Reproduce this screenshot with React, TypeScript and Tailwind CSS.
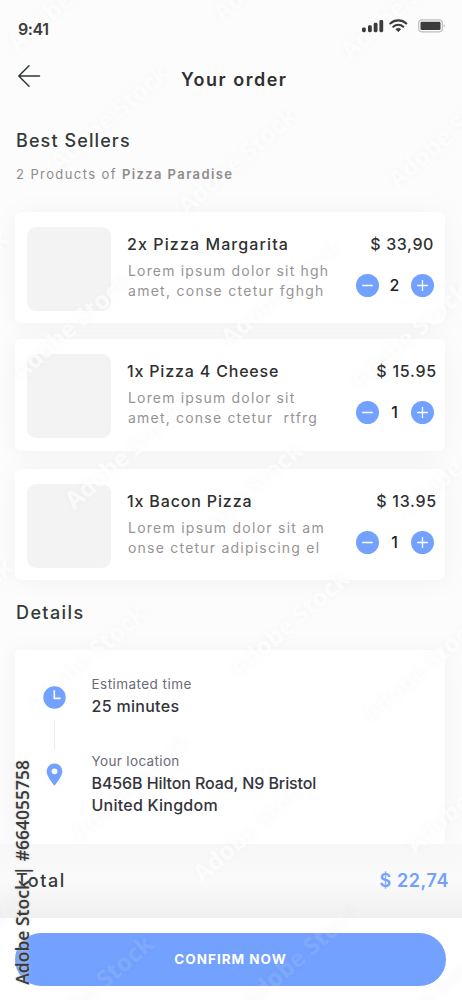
import { useState } from "react"

type Item = {
  id: string
  title: string
  lines: string[]
  price: string
  qty: number
  titleClass: string
  lineClasses: string[]
  priceClass: string
  cardClass: string
}

const items: Item[] = [
  {
    id: "margarita",
    title: "2x Pizza Margarita",
    lines: ["Lorem ipsum dolor sit hgh", "amet, conse ctetur fghgh"],
    price: "$ 33,90",
    qty: 2,
    titleClass: "tracking-[1.1px]",
    lineClasses: ["tracking-[1.17px]", "tracking-[1.27px]"],
    priceClass: "mr-[11px] tracking-[0.6px]",
    cardClass: "h-[111px]",
  },
  {
    id: "cheese",
    title: "1x Pizza 4 Cheese",
    lines: ["Lorem ipsum dolor sit", "amet, conse ctetur  rtfrg"],
    price: "$ 15.95",
    qty: 1,
    titleClass: "tracking-[0.82px]",
    lineClasses: ["tracking-[1.17px]", "tracking-[1.2px]"],
    priceClass: "mr-[8px] tracking-[0.75px]",
    cardClass: "mt-4 h-[112px]",
  },
  {
    id: "bacon",
    title: "1x Bacon Pizza",
    lines: ["Lorem ipsum dolor sit am", "onse ctetur adipiscing el"],
    price: "$ 13.95",
    qty: 1,
    titleClass: "tracking-[0.85px]",
    lineClasses: ["tracking-[1.25px]", "tracking-[1.22px]"],
    priceClass: "mr-[8px] tracking-[0.75px]",
    cardClass: "mt-[18px] h-[111px]",
  },
]

// centre points of the repeated stock label
const marks = [
  [67, -3], [400, 5], [272, -33], [109, 117], [237, 160], [447, 134],
  [-52, 283], [71, 326], [280, 292], [409, 335], [124, 455], [243, 495],
  [457, 465], [-47, 611], [86, 658], [289, 623], [421, 669], [130, 787],
  [252, 828], [465, 799], [-34, 945], [93, 988], [300, 955], [430, 996],
]

function StatusBar() {
  return (
    <div className="relative z-10 flex h-[58px] items-center justify-between pl-[18px] pr-[16px]">
      <span className="text-[16px] font-semibold leading-5 tracking-[-0.4px] text-[#3c3c3c]">9:41</span>
      <svg className="-mt-[7px]" width="85" height="14" viewBox="0 0 85 14" fill="none">
        <g fill="#3c3c3c">
          <rect x="1" y="8.5" width="3.8" height="4.7" rx="1.4" />
          <rect x="7" y="6.3" width="3.8" height="6.9" rx="1.4" />
          <rect x="12.7" y="3.8" width="3.8" height="9.4" rx="1.4" />
          <rect x="18.4" y="1" width="3.8" height="12.2" rx="1.4" />
          <path d="M34.9 10.2a4 4 0 0 1 4.8 0l-2.4 2.5z" stroke="#3c3c3c" strokeWidth=".8" strokeLinejoin="round" />
        </g>
        <path d="M29.3 4.5a11.7 11.7 0 0 1 16 0M32.3 7.7a7.4 7.4 0 0 1 10 0" stroke="#3c3c3c" strokeWidth="2.1" strokeLinecap="round" />
        <rect x="57.7" y=".8" width="23.6" height="12" rx="3.2" stroke="#bdbdbd" strokeWidth="1.2" />
        <rect x="59.5" y="2.7" width="20" height="8.2" rx="1.2" fill="#3c3c3c" />
        <path d="M82.7 5c1.5.5 1.5 3.2 0 3.7z" fill="#bdbdbd" />
      </svg>
    </div>
  )
}

function RoundButton({ plus, onClick }: { plus?: boolean; onClick: () => void }) {
  return (
    <button
      type="button"
      aria-label={plus ? "Increase" : "Decrease"}
      onClick={onClick}
      className="flex size-[23px] items-center justify-center rounded-full bg-[#72a1ff]"
    >
      <svg width="11" height="11" viewBox="0 0 11 11" stroke="#fff" strokeWidth="1.3" strokeLinecap="round">
        <path d="M.6 5.5h9.8" />
        {plus && <path d="M5.5.6v9.8" />}
      </svg>
    </button>
  )
}

function ProductCard({ item }: { item: Item }) {
  const [qty, setQty] = useState(item.qty)

  return (
    <div className={`flex rounded-[6px] bg-white pl-3 shadow-[0_2px_28px_rgba(0,0,0,0.045)] ${item.cardClass}`}>
      <div className="mt-[15px] size-[84px] shrink-0 rounded-[9px] bg-[#f3f3f3]" />
      <div className="relative z-10 ml-4 flex-1 whitespace-pre pt-[22px]">
        <h3 className={`text-[16px] font-medium leading-5 text-[#303030] ${item.titleClass}`}>{item.title}</h3>
        <div className="ml-px mt-[7px] text-[14px] leading-5 text-[#969494]">
          {item.lines.map((line, i) => (
            <p key={line} className={item.lineClasses[i]}>
              {line}
            </p>
          ))}
        </div>
      </div>
      <div className="relative z-10 flex w-[100px] shrink-0 flex-col pt-[22px]">
        <span className={`self-end whitespace-nowrap text-[16px] font-medium leading-5 text-[#303030] ${item.priceClass}`}>
          {item.price}
        </span>
        <div className="ml-[10.5px] mt-[20px] flex items-center">
          <RoundButton onClick={() => setQty(Math.max(0, qty - 1))} />
          <span className="-mt-px w-8 text-center text-[16px] font-medium leading-5 text-[#222228]">{qty}</span>
          <RoundButton plus onClick={() => setQty(qty + 1)} />
        </div>
      </div>
    </div>
  )
}

function DetailsCard() {
  return (
    <div className="mt-[25px] flex h-[194px] rounded-[4px] bg-white pl-[28px] pt-[25px] shadow-[0_2px_28px_rgba(0,0,0,0.045)]">
      <div className="relative z-10 flex w-[23px] flex-col items-center pt-[11px]">
        <svg width="23" height="23" viewBox="0 0 23 23">
          <circle cx="11.5" cy="11.5" r="11.2" fill="#72a1ff" />
          <path d="M11.3 4.2v8.2h6.3" stroke="#fff" strokeWidth="1.6" fill="none" />
        </svg>
        <div className="mt-[11px] h-[29px] w-[1.5px] bg-[#ececee]" />
        <svg className="mt-[14px]" width="17" height="23" viewBox="0 0 17 23">
          <path
            fill="#72a1ff"
            fillRule="evenodd"
            d="M8.5.4a7.8 7.8 0 0 0-7.9 7.8c0 5.6 7.9 14.4 7.9 14.4s7.9-8.8 7.9-14.4A7.8 7.8 0 0 0 8.5.4zm0 5a2.9 2.9 0 1 1 0 5.8 2.9 2.9 0 0 1 0-5.8z"
          />
        </svg>
      </div>
      <div className="relative z-10 ml-[25.5px] whitespace-nowrap">
        <p className="text-[13.5px] leading-[18px] tracking-[0.45px] text-[#6d6b78]">Estimated time</p>
        <p className="mt-[2px] text-[16px] font-medium leading-[22px] tracking-[0.3px] text-[#34343c]">25 minutes</p>
        <p className="mt-[35px] text-[13.5px] leading-[18px] tracking-[0.35px] text-[#6d6b78]">Your location</p>
        <div className="mt-[2px] text-[16px] font-medium leading-[22px] text-[#34343c]">
          <p className="tracking-[-0.1px]">B456B Hilton Road, N9 Bristol</p>
          <p className="tracking-[0.25px]">United Kingdom</p>
        </div>
      </div>
    </div>
  )
}

function StockMarks() {
  return (
    <div className="pointer-events-none absolute inset-0 z-0 overflow-hidden font-['Open_Sans','Noto_Sans',sans-serif]">
      {marks.map(([x, y]) => (
        <span
          key={`${x},${y}`}
          className={`absolute -translate-x-1/2 -translate-y-1/2 -rotate-[41deg] whitespace-nowrap text-[24px] font-bold leading-none [text-shadow:0_0_9px_rgba(0,0,0,0.03)] ${
            y > 930 ? "text-white/10" : "text-white/65"
          }`}
          style={{ left: x, top: y }}
        >
          Adobe Stock
        </span>
      ))}
    </div>
  )
}

export default function App() {
  return (
    <div className="relative isolate flex h-[1000px] w-[462px] flex-col overflow-hidden bg-[#fcfcfc] font-[Inter,sans-serif]">
      <StatusBar />
      <header className="relative z-10 flex h-[44px] items-center pl-[17px]">
        <svg className="-mt-[8px] shrink-0" width="24" height="24" viewBox="0 0 24 24" fill="none" stroke="#303535" strokeWidth="1.5" strokeLinecap="round" strokeLinejoin="round">
          <path d="M22.5 12H2M12 1.8 1.8 12 12 22.2" />
        </svg>
        <h1 className="ml-[140px] whitespace-nowrap text-[18px] font-semibold leading-6 tracking-[1.5px] text-[#303030]">Your order</h1>
      </header>

      <main className="pl-[15px] pr-[17px]">
        <h2 className="relative z-10 mt-[27px] pl-px text-[18px] font-medium leading-6 tracking-[1.1px] text-[#353939]">Best Sellers</h2>
        <p className="relative z-10 mt-[11px] pl-px text-[13px] leading-5 tracking-[1.4px] text-[#8d8b8b]">
          2 Products of <span className="font-semibold">Pizza Paradise</span>
        </p>
        <section className="mt-[28px]">
          {items.map((item) => (
            <ProductCard key={item.id} item={item} />
          ))}
        </section>
        <h2 className="relative z-10 mt-[21px] pl-px text-[18px] font-medium leading-6 tracking-[1.4px] text-[#353939]">Details</h2>
        <DetailsCard />
      </main>

      <div className="flex h-[74px] items-center justify-between bg-linear-to-b from-[#f7f7f7] via-[#fafafa] to-[#f0f0f0] pl-4 pr-[13px]">
        <span className="relative z-10 text-[18px] font-medium leading-6 tracking-[1.5px] text-[#353939]">Total</span>
        <span className="relative z-10 text-[18px] font-semibold leading-6 tracking-[0.6px] text-[#72a1ff]">$ 22,74</span>
      </div>
      <footer className="flex-1 bg-white pl-[15px] pr-4 pt-[15px]">
        <button type="button" className="flex h-[53px] w-full items-center justify-center rounded-full bg-[#72a1ff] text-[13.5px] font-bold tracking-[1px] text-white">
          <span className="relative z-10">CONFIRM NOW</span>
        </button>
      </footer>

      <StockMarks />
      <span className="pointer-events-none absolute bottom-[15px] left-[12px] z-20 rotate-180 whitespace-nowrap font-['Open_Sans','Noto_Sans',sans-serif] text-[17.5px] font-semibold leading-5 text-[#3b3b3b] [text-shadow:0_0_3px_#ccc] [writing-mode:vertical-rl]">
        Adobe Stock | #664055758
      </span>
    </div>
  )
}
